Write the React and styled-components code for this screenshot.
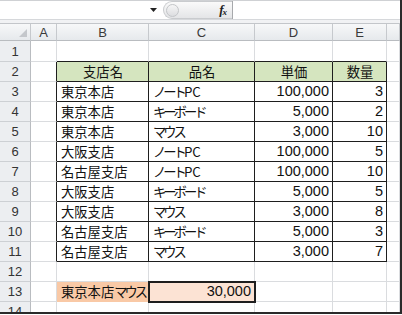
import React from 'react';
import styled, { createGlobalStyle } from 'styled-components';

const GRID = '#dadcdf';
const LINE = '#1e1e1e';
const GREEN = '#d5e5bf';
const PEACH = '#f9c9a6';
const PEACH_LIGHT = '#fce3d4';

const GlobalStyle = createGlobalStyle`
  html, body {
    margin: 0;
    padding: 0;
    background: #fff;
  }
  body {
    font-family: "Liberation Sans", "Noto Sans CJK JP", sans-serif;
  }
`;

const Frame = styled.div`
  width: 402px;
  height: 314px;
  box-sizing: border-box;
  border-right: 2px solid #2a2a2a;
  border-bottom: 2px solid #2a2a2a;
  overflow: hidden;
  display: flex;
  flex-direction: column;
  background: #fff;
`;

/* ---------- formula bar ---------- */

const FormulaBar = styled.div`
  height: 20px;
  flex: none;
  display: flex;
  box-sizing: border-box;
  border-top: 1px solid #cfd1d4;
  border-bottom: 1px solid #d6d8db;
`;

const NameBox = styled.div`
  width: 163px;
  display: flex;
  align-items: center;
  justify-content: flex-end;
  padding-right: 6px;
  box-sizing: border-box;
`;

const Splitter = styled.div`
  width: 69px;
  display: flex;
  align-items: center;
  justify-content: space-between;
  box-sizing: border-box;
  padding: 0 6px 0 2px;
  border: 1px solid #c9cbce;
  border-right: none;
  border-radius: 10px 0 0 10px;
  background: linear-gradient(#fafafa, #e4e5e7);
`;

const Knob = styled.span`
  width: 11px;
  height: 11px;
  border-radius: 50%;
  border: 1px solid #c3c5c8;
  background: linear-gradient(#f6f6f6, #dcdde0);
`;

const Fx = styled.span`
  font-family: "Liberation Serif", serif;
  font-style: italic;
  font-weight: bold;
  font-size: 13px;
  color: #222;
  letter-spacing: -1px;
  sub {
    font-size: 9px;
    vertical-align: -1px;
  }
`;

const FormulaInput = styled.div`
  flex: 1;
  border-left: 1px solid #a7a9ac;
`;

const Spacer = styled.div`
  height: 3px;
  flex: none;
  background: #f1f2f4;
  border-bottom: 1px solid #c3c6ca;
`;

/* ---------- sheet ---------- */

const Sheet = styled.div`
  display: grid;
  grid-template-columns: 31px 26px 92px 106px 78px 54px 1fr;
  grid-template-rows: 17px 21px;
  grid-auto-rows: 20px;
`;

const ColHead = styled.div`
  box-sizing: border-box;
  display: flex;
  align-items: center;
  justify-content: center;
  background: linear-gradient(#f7f8f9, #e6e9ec);
  border-right: 1px solid #c6c9cd;
  border-bottom: 1px solid #b9bcc0;
  font-size: 13px;
  color: #3a3a3a;
  position: relative;
`;

const Corner = styled.svg`
  position: absolute;
  right: 3px;
  bottom: 3px;
`;

const RowHead = styled.div`
  box-sizing: border-box;
  display: flex;
  align-items: center;
  justify-content: center;
  background: #eceef1;
  border-right: 1px solid #b9bcc0;
  border-bottom: 1px solid #cdd0d4;
  font-size: 13px;
  color: #333;
`;

const Cell = styled.div`
  box-sizing: border-box;
  display: flex;
  align-items: center;
  justify-content: ${(p) => p.$align};
  padding: 0 3px 0 4px;
  white-space: nowrap;
  background: ${(p) => p.$fill || '#fff'};
  border-right: 1px solid ${(p) => p.$right};
  border-bottom: 1px solid ${(p) => p.$bottom};
  font-family: ${(p) =>
    p.$num ? '"Liberation Sans", sans-serif' : '"Noto Sans CJK JP", "Liberation Sans", sans-serif'};
  font-size: ${(p) => (p.$num ? '14.5px' : '13.3px')};
  line-height: 1;
  color: #111;
  position: relative;
  z-index: ${(p) => (p.$active ? 1 : 0)};
  outline: ${(p) => (p.$active ? `2px solid ${LINE}` : 'none')};
  outline-offset: -1px;
`;

// katakana is set proportional (narrower) in the original sheet font
const Kana = styled.span`
  letter-spacing: -3px;
`;

const data = {
  2: ['支店名', '品名', '単価', '数量'],
  3: ['東京本店', 'ノートPC', '100,000', '3'],
  4: ['東京本店', 'キーボード', '5,000', '2'],
  5: ['東京本店', 'マウス', '3,000', '10'],
  6: ['大阪支店', 'ノートPC', '100,000', '5'],
  7: ['名古屋支店', 'ノートPC', '100,000', '10'],
  8: ['大阪支店', 'キーボード', '5,000', '5'],
  9: ['大阪支店', 'マウス', '3,000', '8'],
  10: ['名古屋支店', 'キーボード', '5,000', '3'],
  11: ['名古屋支店', 'マウス', '3,000', '7'],
};

const letters = ['A', 'B', 'C', 'D', 'E', ''];

// c: 0 = A ... 5 = F
const inTable = (r, c) => r >= 2 && r <= 11 && c >= 1 && c <= 4;

function withKana(text) {
  return text
    .split(/([\u30A0-\u30FF]+)/)
    .filter(Boolean)
    .map((part, i) => (/[\u30A0-\u30FF]/.test(part) ? <Kana key={i}>{part}</Kana> : part));
}

function cellSpec(r, c) {
  if (r === 13 && c === 1) return { text: '東京本店マウス', fill: PEACH };
  if (r === 13 && c === 2) return { text: '30,000', fill: PEACH_LIGHT, num: true, active: true };
  if (!inTable(r, c)) return { text: '' };
  const text = data[r][c - 1];
  if (r === 2) return { text, fill: GREEN, center: true };
  return { text, num: c >= 3 };
}

function renderCell(r, c) {
  const spec = cellSpec(r, c);
  const right = inTable(r, c) || inTable(r, c + 1) ? LINE : spec.fill || GRID;
  const bottom = inTable(r, c) || inTable(r + 1, c) ? LINE : spec.fill || GRID;
  const align = spec.center ? 'center' : spec.num ? 'flex-end' : 'flex-start';
  return (
    <Cell
      key={`${r}-${c}`}
      $align={align}
      $fill={spec.fill}
      $right={right}
      $bottom={bottom}
      $num={spec.num}
      $active={spec.active}
    >
      <span>{spec.num ? spec.text : withKana(spec.text)}</span>
    </Cell>
  );
}

export default function App() {
  const rowNums = Array.from({ length: 14 }, (_, i) => i + 1);

  return (
    <>
      <GlobalStyle />
      <Frame>
        <FormulaBar>
          <NameBox>
            <svg width="7" height="4" viewBox="0 0 7 4">
              <path d="M0 0 H7 L3.5 4 Z" fill="#222" />
            </svg>
          </NameBox>
          <Splitter>
            <Knob />
            <Fx>
              f<sub>x</sub>
            </Fx>
          </Splitter>
          <FormulaInput />
        </FormulaBar>
        <Spacer />
        <Sheet>
          <ColHead>
            <Corner width="8" height="8" viewBox="0 0 8 8">
              <path d="M8 0 V8 H0 Z" fill="#c4c7cb" />
            </Corner>
          </ColHead>
          {letters.map((l, i) => (
            <ColHead key={i}>{l}</ColHead>
          ))}
          {rowNums.map((r) => (
            <React.Fragment key={r}>
              <RowHead>{r}</RowHead>
              {letters.map((_, c) => renderCell(r, c))}
            </React.Fragment>
          ))}
        </Sheet>
      </Frame>
    </>
  );
}
